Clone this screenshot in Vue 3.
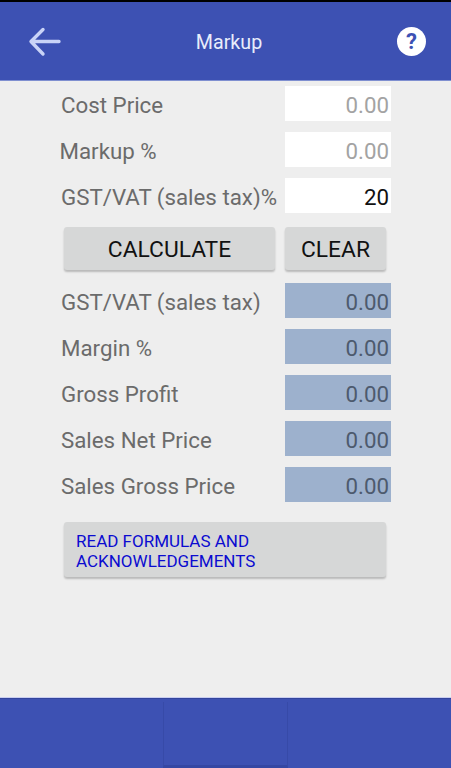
<script setup>
const inputs = [
  { label: 'Cost Price', value: '0.00', cls: 'muted' },
  { label: 'Markup %', value: '0.00', cls: 'muted', shift: true },
  { label: 'GST/VAT (sales tax)%', value: '20', cls: 'dark' },
]
const outputs = ['GST/VAT (sales tax)', 'Margin %', 'Gross Profit', 'Sales Net Price', 'Sales Gross Price']
</script>

<template>
  <div class="screen">
    <header class="top">
      <svg class="back" width="34" height="34" viewBox="0 0 34 34" fill="none" stroke="#c9d3f7" stroke-width="3.4" stroke-linecap="round" stroke-linejoin="round">
        <path d="M3 14.5H31M15 2.5L3 14.5L15 27" />
      </svg>
      <div class="title">Markup</div>
      <div class="help">?</div>
    </header>
    <main class="body">
      <div v-for="r in inputs" :key="r.label" class="row">
        <span class="label" :class="{ shift: r.shift }">{{ r.label }}</span>
        <span class="field white" :class="r.cls">{{ r.value }}</span>
      </div>
      <div class="actions">
        <div class="btn calc">CALCULATE</div>
        <div class="btn clear">CLEAR</div>
      </div>
      <div v-for="l in outputs" :key="l" class="row">
        <span class="label">{{ l }}</span>
        <span class="field blue">0.00</span>
      </div>
      <div class="btn formulas">READ FORMULAS AND<br />ACKNOWLEDGEMENTS</div>
    </main>
    <footer class="bottom"><div class="ad"></div></footer>
  </div>
</template>

<style scoped>
.screen {
  width: 451px;
  height: 768px;
  display: flex;
  flex-direction: column;
  background: #eeeeee;
  font-family: Roboto, "Liberation Sans", sans-serif;
  overflow: hidden;
}
.top {
  border-top: 2px solid #000;
  border-bottom: 1px solid #7f8fd0;
  height: 78px;
  flex: none;
  background: #3d51b3;
  display: flex;
  align-items: center;
  justify-content: space-between;
  padding: 0 25px 0 28px;
  position: relative;
}
.back { margin-top: 6px; }
.title {
  position: absolute;
  left: 0;
  right: 0;
  top: 29px;
  padding-left: 7px;
  text-align: center;
  color: #e9edfb;
  font-size: 19.7px;
  line-height: 24px;
}
.help {
  width: 29px;
  height: 29px;
  border-radius: 50%;
  background: #fff;
  color: #3d51b3;
  font-size: 22px;
  font-weight: 700;
  line-height: 29px;
  text-align: center;
  margin-top: 1px;
}
.body {
  flex: 1;
  padding: 5px 60px 0 61px;
  display: flex;
  flex-direction: column;
}
.row {
  height: 35px;
  margin-bottom: 11px;
  display: flex;
  align-items: center;
  justify-content: space-between;
}
.label {
  color: #6b6b6b;
  font-size: 22.3px;
  padding-top: 2px;
  white-space: nowrap;
}
.label.shift { margin-left: -1.5px; }
.field {
  width: 106px;
  height: 35px;
  box-sizing: border-box;
  padding-right: 2px;
  text-align: right;
  font-size: 22.3px;
  line-height: 38px;
}
.white { background: #fff; }
.muted { color: #a3a3a3; }
.dark { color: #111; }
.blue { background: #9db1cd; color: #4d5a6e; }
.actions {
  display: flex;
  gap: 10px;
  margin: 3px 5px 13px 3px;
  height: 43px;
}
.btn {
  background: #d6d7d7;
  border-radius: 3px;
  box-shadow: 0 2px 2px rgba(0, 0, 0, 0.22);
  color: #111;
}
.calc, .clear {
  text-align: center;
  font-size: 22.8px;
  line-height: 45px;
}
.calc { width: 211px; }
.clear { flex: 1; }
.formulas {
  margin: 9px 5px 0 3px;
  height: 55px;
  box-sizing: border-box;
  padding: 9px 12px 0;
  color: #0b0bd0;
  font-size: 17px;
  line-height: 20px;
}
.bottom {
  height: 71px;
  flex: none;
  background: #3d51b3;
  border-top: 1px solid #c8cdf0;
  box-sizing: border-box;
  display: flex;
  justify-content: center;
  box-shadow: inset 0 1px 0 #33449c;
}
.ad {
  width: 125px;
  margin-top: 4px;
  border: 1px solid #374aa8;
  border-top: none;
  border-bottom: 3px solid #3547a3;
  box-sizing: border-box;
}
</style>
